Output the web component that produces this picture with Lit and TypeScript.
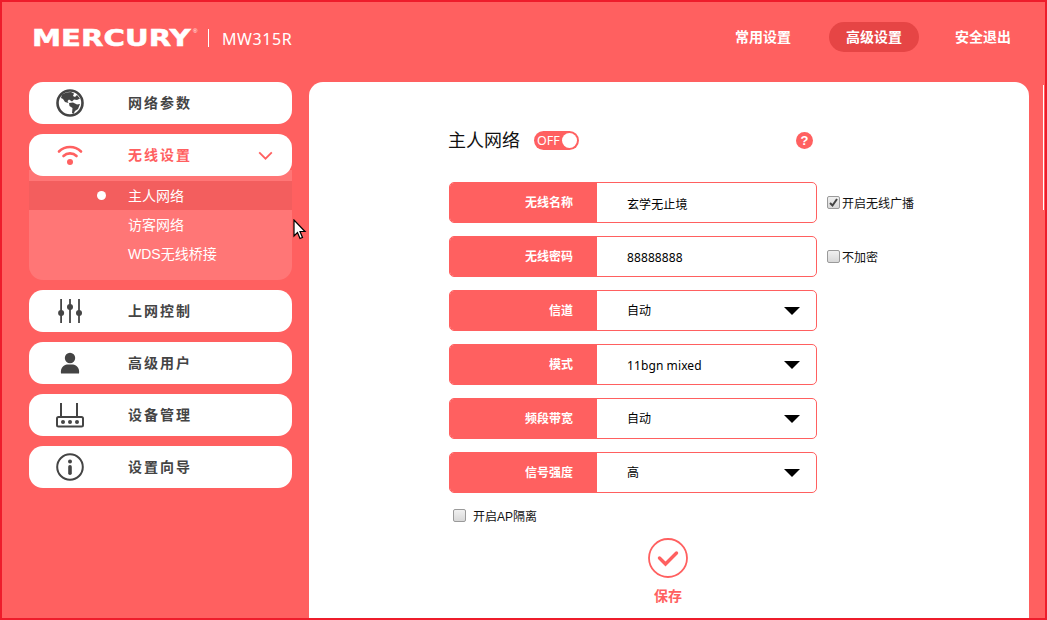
import { LitElement, html, css, svg } from "lit";
import { customElement } from "lit/decorators.js";

const ICONS: Record<string, unknown> = {
  globe: svg`<svg width="28" height="28" viewBox="0 0 28 28"><circle cx="14" cy="14" r="12.5" fill="#fff" stroke="#444" stroke-width="2.6"/><path d="M6 5.5 10 3.5 15 3 18 4.5 17 7 19 8 21 6 24 9.5 21 11 18 10.5 16 12.5 13 10.5 11.5 12 12.5 14 9 13 7 10 5 9Z M13 14 17 13.5 21 15.5 24 15 22 20 19 22 17.5 25 16 24 16.5 19 13.5 17Z" fill="#444"/></svg>`,
  wifi: svg`<svg width="26" height="22" viewBox="0 0 26 22" fill="none" stroke="#ff6060" stroke-width="2.6" stroke-linecap="round"><path d="M2 7.5C8 1.5 18 1.500 24 7.5"/><path d="M6.500 12C10 8.500 16 8.500 19.500 12"/><circle cx="13" cy="18" r="3" fill="#ff6060" stroke="none"/></svg>`,
  sliders: svg`<svg width="26" height="26" viewBox="0 0 26 26" fill="#444"><rect x="3.200" y="1" width="1.800" height="24"/><rect x="12.100" y="1" width="1.800" height="24"/><rect x="21.100" y="1" width="1.800" height="24"/><circle cx="4.100" cy="15" r="3"/><circle cx="13" cy="9" r="3"/><circle cx="22" cy="15" r="3"/></svg>`,
  user: svg`<svg width="20" height="22" viewBox="0 0 20 22" fill="#444"><circle cx="10" cy="6" r="5.200"/><path d="M1 21.500C0 16 4 12.500 7 12.500H13C16 12.500 20 16 19 21.500Z"/></svg>`,
  router: svg`<svg width="28" height="26" viewBox="0 0 28 26"><path d="M5 1V15M21 1V15" stroke="#444" stroke-width="2" fill="none"/><rect x="1" y="15" width="26" height="9.500" rx="1.500" fill="none" stroke="#444" stroke-width="2"/><circle cx="7" cy="20" r="2" fill="#444"/><circle cx="14" cy="20" r="2" fill="#444"/><circle cx="21" cy="20" r="2" fill="#444"/></svg>`,
  info: svg`<svg width="28" height="28" viewBox="0 0 28 28"><circle cx="14" cy="14" r="12.800" fill="none" stroke="#444" stroke-width="2"/><circle cx="14" cy="8.500" r="2" fill="#444"/><rect x="12.200" y="12" width="3.600" height="10" rx="1.800" fill="#444"/></svg>`,
};

@customElement("app-root")
export class AppRoot extends LitElement {
  static styles = css`
    :host { display: block; width: 1047px; height: 620px; overflow: hidden; font-family: "Liberation Sans", "Noto Sans CJK SC", sans-serif; }
    .page { box-sizing: border-box; width: 1047px; height: 620px; border: 2px solid #ee1c2b; background: #ff6060; position: relative; overflow: hidden; display: flex; flex-direction: column; }
    .header { height: 80px; flex: none; display: flex; align-items: center; padding: 0 34px 0 30px; color: #fff; }
    .logo { width: 161px; height: 24px; margin-top: -9px; display: block; position: relative; }
    .logotext { display: inline-block; width: 124px; font: bold 23px/24px "DejaVu Sans", sans-serif; -webkit-text-stroke: 0.5px #fff; transform: scaleX(1.27); transform-origin: 0 50%; white-space: nowrap; }
    .reg { position: absolute; left: 161px; top: 1px; font-size: 6px; line-height: 8px; }
    .logosep { width: 1px; height: 18px; background: #fff; margin: -8px 13px 0 15px; }
    .model { font: 16px "Noto Sans", sans-serif; margin-top: -6px; letter-spacing: 0.6px; }
    .nav { margin-left: auto; display: flex; align-items: center; margin-top: -10px; }
    .nav span { height: 30px; line-height: 30px; text-align: center; font-size: 14px; font-weight: bold; }
    .nav span.on { background: #e64545; width: 90px; border-radius: 15px; margin: 0 36px 0 38px; }
    .body { flex: 1; display: flex; padding-left: 27px; gap: 17px; min-height: 0; }
    .side { width: 263px; flex: none; display: flex; flex-direction: column; gap: 10px; }
    .item { height: 42px; flex: none; background: #fff; border-radius: 14px; display: flex; align-items: center; color: #444; font-size: 14px; font-weight: bold; letter-spacing: 2px; position: relative; }
    .item .ic { width: 82px; flex: none; display: flex; justify-content: center; }
    .item .lb { margin-left: 17px; margin-top: -2px; }
    .item.open { color: #ff6060; z-index: 1; }
    .chev { position: absolute; left: 229px; top: 17px; }
    .group { display: flex; flex-direction: column; }
    .sub { background: #ff7676; border-radius: 0 0 14px 14px; margin-top: -6px; padding: 11px 0 0; height: 110px; box-sizing: border-box; color: #fff; font-size: 14px; }
    .sub div { height: 29px; line-height: 31px; padding-left: 99px; position: relative; }
    .sub div.on { background: #f35e5e; }
    .sub div.on::before { content: ""; position: absolute; left: 68px; top: 10px; width: 9px; height: 9px; border-radius: 50%; background: #fff; }
    .main { width: 720px; flex: none; background: #fff; border-radius: 14px 14px 0 0; padding: 46px 0 0 140px; box-sizing: border-box; }
    .title { display: flex; align-items: center; height: 24px; width: 368px; position: relative; font-size: 18px; color: #111; }
    .titletext { margin-top: -2px; margin-left: -1px; }
    .toggle { margin-left: 14px; width: 45px; height: 19px; border-radius: 10px; background: #ff6060; position: relative; color: #fff; font: 12.5px/19px "Noto Sans", sans-serif; padding-left: 3px; box-sizing: border-box; }
    .toggle i { position: absolute; right: 2px; top: 2px; width: 15px; height: 15px; border-radius: 50%; background: #fff; }
    .help { position: absolute; left: 347px; top: 4px; width: 17px; height: 17px; border-radius: 50%; background: #ff6060; color: #fff; font-size: 13px; font-weight: bold; line-height: 17px; text-align: center; }
    .rows { margin-top: 30px; display: flex; flex-direction: column; gap: 13px; }
    .rowwrap { display: flex; align-items: center; }
    .row { box-sizing: border-box; width: 368px; height: 41px; border: 1px solid #ff6060; border-radius: 5px; display: flex; overflow: hidden; background: #fff; }
    .key { width: 147px; flex: none; background: #ff6060; color: #fff; font-size: 12px; font-weight: bold; text-align: right; line-height: 40px; padding-right: 24px; box-sizing: border-box; }
    .val { flex: 1; padding: 2px 16px 0 30px; font: 12px "Noto Sans", "Noto Sans CJK SC", sans-serif; color: #000; display: flex; justify-content: space-between; align-items: center; letter-spacing: 0.1px; box-sizing: border-box; }
    .val .up { margin-top: -3px; }
    .arrow { width: 0; height: 0; border-left: 8.5px solid transparent; border-right: 8.5px solid transparent; border-top: 8px solid #000; margin-top: -1px; }
    .check { display: flex; align-items: center; font-size: 12px; color: #111; gap: 2px; margin-left: 10px; }
    .box { width: 11px; height: 11px; border: 1px solid #9a9a9a; border-radius: 2px; background: linear-gradient(#f0f0f0, #d8d8d8); display: block; flex: none; position: relative; }
    .box svg { position: absolute; left: 0; top: 0; }
    .ap { margin: 14px 0 0 4px; display: flex; align-items: center; font-size: 12px; color: #111; gap: 7px; height: 16px; }
    .save { width: 438px; margin-top: 15px; display: flex; flex-direction: column; align-items: center; color: #ff6060; font-size: 14px; font-weight: bold; gap: 7px; }
    .cursor { position: absolute; left: 291px; top: 217px; }
    .rail { position: absolute; left: 1041px; top: 83px; width: 1px; height: 125px; background: #fff; }
  `;

  private row(k: string, v: string, arrow = false, up = false) {
    return html`<div class="row"><div class="key">${k}</div><div class="val"><span class=${up ? "up" : ""}>${v}</span>${arrow ? html`<span class="arrow"></span>` : ""}</div></div>`;
  }

  render() {
    const tick = svg`<svg width="11" height="11" viewBox="0 0 11 11"><path d="M2 6 4.500 8.500 9 2" fill="none" stroke="#444" stroke-width="2"/></svg>`;
    return html`<div class="page">
      <div class="header">
        <div class="logo"><span class="logotext">MERCURY</span><span class="reg">®</span></div>
        <div class="logosep"></div>
        <div class="model">MW315R</div>
        <div class="nav"><span>常用设置</span><span class="on">高级设置</span><span>安全退出</span></div>
      </div>
      <div class="body">
        <div class="side">
          <div class="item"><div class="ic">${ICONS.globe}</div><div class="lb">网络参数</div></div>
          <div class="group">
            <div class="item open"><div class="ic">${ICONS.wifi}</div><div class="lb">无线设置</div>
              <svg class="chev" width="15" height="9" viewBox="0 0 16 10"><path d="M1 1.500 8 8.500 15 1.500" fill="none" stroke="#ff6060" stroke-width="2"/></svg></div>
            <div class="sub"><div class="on">主人网络</div><div>访客网络</div><div>WDS无线桥接</div></div>
          </div>
          <div class="item"><div class="ic">${ICONS.sliders}</div><div class="lb">上网控制</div></div>
          <div class="item"><div class="ic">${ICONS.user}</div><div class="lb">高级用户</div></div>
          <div class="item"><div class="ic">${ICONS.router}</div><div class="lb">设备管理</div></div>
          <div class="item"><div class="ic">${ICONS.info}</div><div class="lb">设置向导</div></div>
        </div>
        <div class="main">
          <div class="title"><span class="titletext">主人网络</span><div class="toggle">OFF<i></i></div><div class="help">?</div></div>
          <div class="rows">
            <div class="rowwrap">${this.row("无线名称", "玄学无止境")}<div class="check"><span class="box">${tick}</span>开启无线广播</div></div>
            <div class="rowwrap">${this.row("无线密码", "88888888")}<div class="check"><span class="box"></span>不加密</div></div>
            ${this.row("信道", "自动", true, true)}
            ${this.row("模式", "11bgn mixed", true)}
            ${this.row("频段带宽", "自动", true, true)}
            ${this.row("信号强度", "高", true, true)}
          </div>
          <div class="ap"><span class="box"></span>开启AP隔离</div>
          <div class="save">
            <svg width="40" height="40" viewBox="0 0 40 40"><circle cx="20" cy="20" r="19" fill="none" stroke="#ff6060" stroke-width="1.800"/><path d="M11.500 20 17.500 26 28.500 15" fill="none" stroke="#ff6060" stroke-width="3.400" stroke-linecap="round"/></svg>
            <span>保存</span>
          </div>
        </div>
      </div>
      <div class="rail"></div>
      <svg class="cursor" width="14" height="22" viewBox="0 0 14 22"><path d="M1 1V17L4.500 13.500 7 19.500 9.500 18.500 7 12.500H12Z" fill="#fff" stroke="#000" stroke-width="1.200"/></svg>
    </div>`;
  }
}
